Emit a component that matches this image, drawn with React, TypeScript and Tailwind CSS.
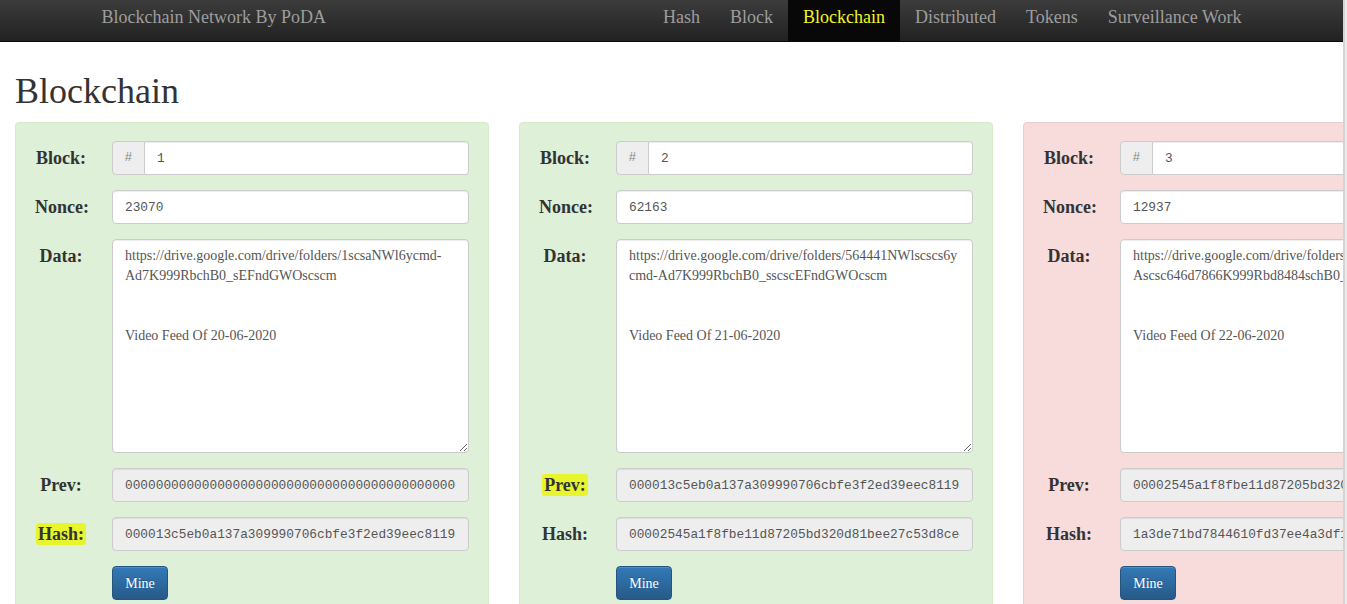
import React from "react";

interface BlockData {
  num: number;
  nonce: string;
  data: string;
  prev: string;
  hash: string;
  valid: boolean;
  markPrev?: boolean;
  markHash?: boolean;
}

const blocks: BlockData[] = [
  {
    num: 1,
    nonce: "23070",
    data: "https://drive.google.com/drive/folders/1scsaNWl6ycmd-Ad7K999RbchB0_sEFndGWOscscm\n\n\nVideo Feed Of 20-06-2020",
    prev: "0000000000000000000000000000000000000000000000000000000000000000",
    hash: "000013c5eb0a137a309990706cbfe3f2ed39eec8119a5e3f1a5d7c3e6b2a9f01",
    valid: true,
    markHash: true,
  },
  {
    num: 2,
    nonce: "62163",
    data: "https://drive.google.com/drive/folders/564441NWlscscs6ycmd-Ad7K999RbchB0_sscscEFndGWOcscm\n\n\nVideo Feed Of 21-06-2020",
    prev: "000013c5eb0a137a309990706cbfe3f2ed39eec8119a5e3f1a5d7c3e6b2a9f01",
    hash: "00002545a1f8fbe11d87205bd320d81bee27c53d8ce4b1a07f9e2d3c5a6b8e10",
    valid: true,
    markPrev: true,
  },
  {
    num: 3,
    nonce: "12937",
    data: "https://drive.google.com/drive/folders/1scsaNWl6ycmd-Ascsc646d7866K999Rbd8484schB0_sEFndGWOscscm\n\n\nVideo Feed Of 22-06-2020",
    prev: "00002545a1f8fbe11d87205bd320d81bee27c53d8ce4b1a07f9e2d3c5a6b8e10",
    hash: "1a3de71bd7844610fd37ee4a3df1c09b8e2f6a4d7c5b3e1f09a8d6c4b2e0f7a1",
    valid: false,
  },
];

const navItems = ["Hash", "Block", "Blockchain", "Distributed", "Tokens", "Surveillance Work"];

function Label({ text, mark }: { text: string; mark?: boolean }) {
  return (
    <div className="w-[52px] shrink-0 text-center leading-[34px] text-[18px] font-bold text-[#333]">
      {mark ? (
        <span className="bg-[#e8f52c] px-[2px] py-[1px] rounded-[3px]">{text}</span>
      ) : (
        text
      )}
    </div>
  );
}

const inputCls =
  "w-full h-[34px] px-[12px] border border-[#ccc] rounded-[4px] shadow-[inset_0_1px_1px_rgba(0,0,0,0.075)] text-[12.8px] text-[#555] outline-none font-['Liberation_Mono',monospace]";

function BlockCard({ b }: { b: BlockData }) {
  return (
    <div
      className={
        "w-[474px] shrink-0 border rounded-[4px] px-[19px] pt-[18px] pb-[19px] " +
        (b.valid ? "bg-[#dff0d8] border-[#d6e9c6]" : "bg-[#f8dcdc] border-[#ebccd1]")
      }
    >
      <div className="flex flex-col gap-[15px]">
        <div className="flex gap-[25px]">
          <Label text="Block:" />
          <div className="flex flex-1 h-[34px]">
            <span className="w-[33px] shrink-0 flex items-center justify-center bg-[#eee] border border-[#ccc] rounded-l-[4px] text-[#888] text-[13px] font-['Liberation_Mono',monospace]">
              #
            </span>
            <input
              readOnly
              value={b.num}
              className={inputCls + " border-l-0 rounded-l-none bg-white"}
            />
          </div>
        </div>
        <div className="flex gap-[25px]">
          <Label text="Nonce:" />
          <input readOnly value={b.nonce} className={inputCls + " bg-white"} />
        </div>
        <div className="flex gap-[25px]">
          <Label text="Data:" />
          <textarea
            readOnly
            value={b.data}
            className="w-full h-[214px] px-[12px] py-[6px] border border-[#ccc] rounded-[4px] bg-white shadow-[inset_0_1px_1px_rgba(0,0,0,0.075)] text-[14px] leading-[20px] text-[#555] outline-none resize-y font-['Liberation_Serif',serif]"
          />
        </div>
        <div className="flex gap-[25px]">
          <Label text="Prev:" mark={b.markPrev} />
          <input readOnly value={b.prev} className={inputCls + " bg-[#eee]"} />
        </div>
        <div className="flex gap-[25px]">
          <Label text="Hash:" mark={b.markHash} />
          <input readOnly value={b.hash} className={inputCls + " bg-[#eee]"} />
        </div>
        <div className="flex gap-[25px]">
          <div className="w-[52px] shrink-0" />
          <button className="h-[34px] w-[56px] rounded-[4px] border border-[#245580] bg-gradient-to-b from-[#337ab7] to-[#265a88] text-white text-[14px] [text-shadow:0_-1px_0_rgba(0,0,0,0.2)] shadow-[inset_0_1px_0_rgba(255,255,255,0.15)]">
            Mine
          </button>
        </div>
      </div>
    </div>
  );
}

export default function App() {
  return (
    <div className="flex h-[604px] w-[1347px] overflow-hidden bg-white font-['Liberation_Serif',serif]">
      <div className="w-[1343px] shrink-0 overflow-hidden">
        {/* Navbar */}
        <nav className="h-[42px] bg-gradient-to-b from-[#3c3c3c] to-[#222] border-b border-[#080808]">
          <div className="w-[1170px] mx-auto pl-[15px] flex justify-between">
            <div className="pt-[7px] leading-[20px] text-[18px] text-[#9d9d9d]">Blockchain Network By PoDA</div>
            <ul className="flex">
              {navItems.map((item) => (
                <li
                  key={item}
                  className={
                    "h-[41px] px-[15px] pt-[7px] leading-[20px] text-[18px] " +
                    (item === "Blockchain" ? "bg-[#080808] text-[#f5f51e]" : "text-[#9d9d9d]")
                  }
                >
                  {item}
                </li>
              ))}
            </ul>
          </div>
        </nav>

        <h1 className="mt-[29px] mb-[11px] px-[15px] text-[36px] leading-[40px] text-[#333]">Blockchain</h1>

        <div className="flex gap-[30px] px-[15px]">
          {blocks.map((b) => (
            <BlockCard key={b.num} b={b} />
          ))}
        </div>
      </div>
      <div className="w-[4px] shrink-0 flex">
        <div className="w-[2px] bg-[#d4d4d4]" />
        <div className="w-[2px] bg-[#ececec]" />
      </div>
    </div>
  );
}
